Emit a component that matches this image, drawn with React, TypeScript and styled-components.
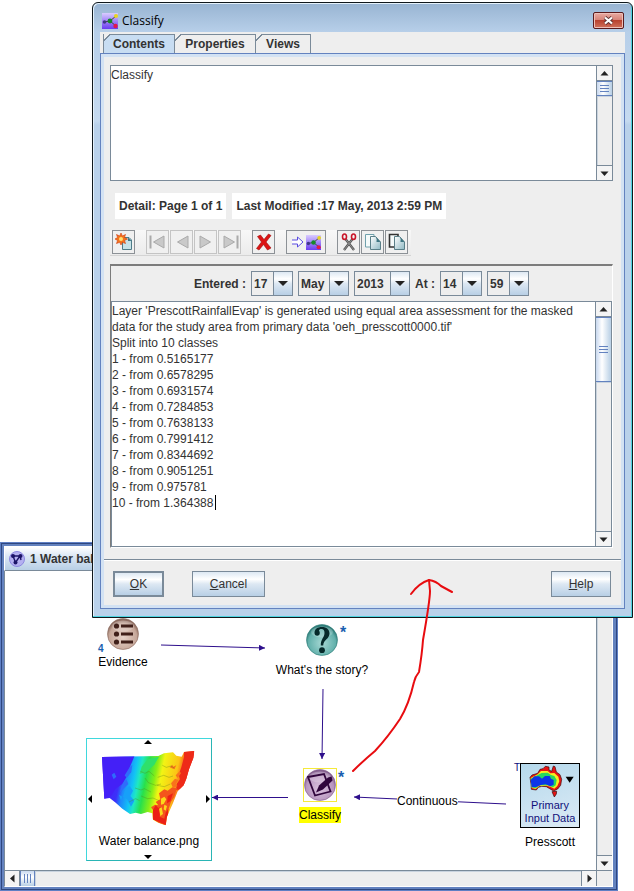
import React from 'react';
import styled, { createGlobalStyle, css } from 'styled-components';

const slate = '#7a8a99';
const steel = '#6382bf';
const face = '#eeeeee';
const ink = '#333333';
const edge = '#2e0f8c';
const steelGradient = 'linear-gradient(180deg, #dde8f3 0%, #ffffff 30%, #dde8f3 50%, #b8cfe5 100%)';

const GlobalStyle = createGlobalStyle`
  *, *::before, *::after { box-sizing: border-box; }
  html, body { margin: 0; background: #fff; }
  body, button, select, textarea { font-family: "Liberation Sans", Arial, sans-serif; font-size: 12px; color: ${ink}; }
`;

const Desktop = styled.main`
  position: relative;
  min-height: 891px;
  overflow: hidden;
`;

/* ---------- scroll bars ---------- */

const Bar = styled.div<{ $horizontal?: boolean }>`
  display: flex;
  flex: none;
  background: ${face};
  ${p => p.$horizontal
    ? css`height: 16px; border-top: 1px solid ${slate};`
    : css`width: 16px; flex-direction: column; border-left: 1px solid ${slate};`}
`;

const BarButton = styled.button<{ $horizontal?: boolean; $end?: boolean }>`
  display: flex;
  align-items: center;
  justify-content: center;
  flex: none;
  width: 15px;
  height: 15px;
  padding: 0;
  border: 0 solid ${slate};
  background: #f4f4f4;
  ${p => p.$horizontal
    ? (p.$end ? 'border-left-width: 1px;' : 'border-right-width: 1px;')
    : (p.$end ? 'border-top-width: 1px;' : 'border-bottom-width: 1px;')}
`;

const Thumb = styled.div<{ $horizontal?: boolean; $size: number }>`
  display: flex;
  align-items: center;
  justify-content: center;
  flex: none;
  border: 0 solid ${steel};
  ${p => p.$horizontal
    ? css`width: ${p.$size}px; border-width: 0 1px; background: linear-gradient(180deg, #c8d8ef, #fff 40%, #b8cfe5);`
    : css`height: ${p.$size}px; border-width: 1px 0; background: linear-gradient(90deg, #c8d8ef, #fff 40%, #b8cfe5);`}
`;

const Track = styled.div`
  flex: 1;
  box-shadow: inset 1px 1px 0 #c9d3de;
`;

const Triangle = ({ turn }: { turn: number }) => (
  <svg width="9" height="9" viewBox="0 0 9 9" aria-hidden="true">
    <path d="M4.500 2 L8.500 6.500 H.5Z" fill="#222" transform={`rotate(${turn} 4.500 4.500)`} />
  </svg>
);

function ScrollBar({ horizontal, thumb }: { horizontal?: boolean; thumb?: number }) {
  return (
    <Bar $horizontal={horizontal}>
      <BarButton $horizontal={horizontal} aria-label={horizontal ? 'Scroll left' : 'Scroll up'}>
        <Triangle turn={horizontal ? -90 : 0} />
      </BarButton>
      {thumb && (
        <Thumb $horizontal={horizontal} $size={thumb}>
          <svg width="9" height="9" viewBox="0 0 9 9" aria-hidden="true">
            <path
              d={horizontal ? 'M1.500 0V9M4.500 0V9M7.500 0V9' : 'M0 1.500H9M0 4.500H9M0 7.500H9'}
              stroke={steel}
              fill="none"
            />
          </svg>
        </Thumb>
      )}
      <Track />
      <BarButton $horizontal={horizontal} $end aria-label={horizontal ? 'Scroll right' : 'Scroll down'}>
        <Triangle turn={horizontal ? 90 : 180} />
      </BarButton>
    </Bar>
  );
}

/* ---------- map window ---------- */

const MapWindow = styled.section`
  position: absolute;
  left: 0;
  right: 16px;
  top: 542px;
  bottom: 0;
  display: flex;
  flex-direction: column;
  padding: 4px 5px 4px 4px;
  background: ${steel};
  box-shadow: inset 0 0 0 1px #5e7fc4, inset 0 0 0 2px #2f4780;
`;

const MapTitle = styled.header`
  display: flex;
  align-items: center;
  gap: 5px;
  flex: none;
  height: 25px;
  padding-left: 4px;
  border: 1px solid #fff;
  border-bottom-color: ${slate};
  background: linear-gradient(180deg, #fff, #dbe7f5 40%, #b8cfe5);
  font-weight: bold;
`;

const MapBody = styled.div`
  flex: 1;
  display: flex;
  min-height: 0;
  border-left: 1px solid ${slate};
  border-right: 1px solid #fff;
  background: #fff;
`;

const MapFooter = styled.div`
  display: flex;
  border: 1px solid #fff;
  border-top: 0;
  border-left-color: ${slate};
  & > :first-child { flex: 1; }
`;

const Corner = styled.div`
  width: 16px;
  border-left: 1px solid ${slate};
  border-top: 1px solid ${slate};
  background: ${face};
`;

const Canvas = styled.div`
  position: relative;
  flex: 1;
  overflow: hidden;
  color: #000;
`;

const Edges = styled.svg`
  position: absolute;
  left: 0;
  top: 0;
`;

const Node = styled.figure<{ $x: number; $y: number; $width: number }>`
  position: absolute;
  left: ${p => p.$x}px;
  top: ${p => p.$y}px;
  width: ${p => p.$width}px;
  margin: 0;
  display: flex;
  flex-direction: column;
  align-items: center;
`;

const Caption = styled.figcaption<{ $gap?: number; $marked?: boolean }>`
  margin-top: ${p => p.$gap ?? 5}px;
  line-height: 16px;
  white-space: nowrap;
  background: ${p => (p.$marked ? '#ffff00' : 'transparent')};
`;

const Badge = styled.span<{ $x: number; $y: number; $size: number; $light?: boolean }>`
  position: absolute;
  left: ${p => p.$x}px;
  top: ${p => p.$y}px;
  font-size: ${p => p.$size}px;
  line-height: ${p => p.$size}px;
  font-weight: ${p => (p.$light ? 'normal' : 'bold')};
  color: ${p => (p.$light ? '#10107a' : '#1a5fb0')};
`;

const EdgeLabel = styled.span`
  position: absolute;
  left: 392px;
  top: 222px;
  line-height: 16px;
  background: #fff;
`;

const Selection = styled.div`
  display: flex;
  border: 1px solid #f5ea3a;
`;

const PictureFrame = styled.div`
  position: relative;
  display: flex;
  flex-direction: column;
  align-items: center;
  width: 126px;
  height: 123px;
  padding-top: 9px;
  border: 1px solid #2ab5b5;
  border-top-color: #3fd8dd;
  border-left-color: #3fd8dd;
`;

const Handle = styled.span<{ $side: 'top' | 'right' | 'bottom' | 'left' }>`
  position: absolute;
  display: flex;
  ${p => ({
    top: 'top: -1px; left: 57px;',
    bottom: 'bottom: -1px; left: 57px;',
    left: 'left: -1px; top: 56px;',
    right: 'right: -1px; top: 56px;',
  }[p.$side])}
`;

const InputTile = styled.div`
  display: flex;
  flex-direction: column;
  align-items: center;
  width: 60px;
  height: 65px;
  padding-top: 1px;
  border: 1px solid #000;
  background: linear-gradient(160deg, #b5d9ec, #dceaf5);
  color: #10107a;
`;

const TileLine = styled.span`
  font-size: 11px;
  line-height: 13px;
  white-space: nowrap;
`;

const StateMap = () => (
  <svg width="100" height="80" viewBox="90 70 300 240" role="img" aria-label="Water balance map">
    <defs>
      <linearGradient id="rain" gradientUnits="userSpaceOnUse" x1="100" y1="165" x2="350" y2="215">
        <stop offset="0" stopColor="#4a1cf5" />
        <stop offset=".2" stopColor="#3c30fa" />
        <stop offset=".26" stopColor="#1e86fa" />
        <stop offset=".36" stopColor="#12c4f5" />
        <stop offset=".42" stopColor="#1fe8c0" />
        <stop offset=".5" stopColor="#28e04c" />
        <stop offset=".6" stopColor="#86ee18" />
        <stop offset=".67" stopColor="#f2f414" />
        <stop offset=".84" stopColor="#fbc416" />
        <stop offset=".92" stopColor="#f8501c" />
        <stop offset="1" stopColor="#ee1c1c" />
      </linearGradient>
      <clipPath id="state">
        <path d="M99 97 L268 94 285 86 312 83 322 93 338 96 345 82 376 79 373 100 366 118 360 134 352 162 344 182 326 200 312 235 300 262 294 276 290 302 268 294 252 285 250 266 236 262 216 268 200 264 183 268 160 252 140 234 122 220 106 222Z" />
      </clipPath>
    </defs>
    <g clipPath="url(#state)">
      <rect x="90" y="70" width="300" height="240" fill="url(#rain)" />
      <path d="M99 90 H198 L190 110 182 128 186 142 172 158 160 178 140 192 126 214 99 226Z" fill="#4420f7" />
      <path d="M182 128 l8 -8 -3 22 -14 18 -6 -8z M160 178 l12 -14 6 14 -18 18 -8 8z M128 150 l8 -6 6 12 -8 8z" fill="#2f6cfb" />
      <path d="M168 196 l14 -12 10 14 -8 16 12 14 -10 18 -12 -22 -12 -8z M150 210l10 6 -4 12z" fill="#17a0f8" />
      <path d="M236 104 l34 -8 -14 24 -22 20 -22 8 6 -22z" fill="#2fe06a" />
      <path d="M345 78 h34 l-4 30 -16 36 -10 36 -16 14 -12 2 2 -18 10 -14 -4 -14 8 -22 8 -30z" fill="#ee2a18" />
      <path d="M270 206 l16 -12 10 4 14 -10 14 2 -8 26 -10 16 -6 18 -8 24 0 30 -22 -8 -18 -12 0 -28 -6 -8 12 -8 10 2 -8 -10 14 -8 -2 -10z" fill="#f4551c" />
      <path d="M252 256 l8 -14 8 8 6 -2 -2 28 14 6 4 -18 8 -12 0 52 -48 -20z M296 214l16-8-8 24-10 6z" fill="#ec2015" />
      <path d="M276 222 l10 -6 6 8 -8 14 -8 2z M286 240l8 4-4 14-6-4z M270 252l8 -4 4 20 -8 6z" fill="#fbd81a" />
      <path d="M306 176 l12 -14 10 4 -8 14 6 4 -14 6z M302 128l8-8 2 6 10-4-6 12z M320 152l12-12 4 6-10 14z" fill="#f9721c" />
      <path d="M214 140 l14 6 12 -6 16 14 M198 190 l18 6 10 -4 20 10 M216 214 l20 8 16 -2 18 8 M228 160 l10 14 22 8 16 -4 M266 158 l18 -6 16 6 12 -4 M264 182 l22 4 18 -8 M180 232l20-10 12 6 M280 122l12 6 14-4 10 6" fill="none" stroke="#58801c" strokeOpacity=".5" strokeWidth="2" />
    </g>
  </svg>
);

const Australia = () => (
  <svg width="56" height="34" viewBox="103 73 168 102" aria-hidden="true">
    <path d="M127 110 L133 103 150 98 157 86 166 84 173 77 184 79 184 88 192 92 197 76 202 78 206 94 217 102 222 116 219 134 210 145 198 151 186 144 176 138 162 137 152 140 146 148 131 146 130 130Z" fill="#e81414" stroke="#3a0808" strokeWidth="2" />
    <path d="M129 112 L150 101 160 91 180 91 188 98 200 97 212 108 215 122 209 136 200 144 188 138 177 135 155 136 144 145 132 142Z" fill="#f8ee20" />
    <path d="M129 114 L150 103 162 97 180 96 190 103 200 106 207 118 204 134 196 140 180 134 156 134 144 143 132 140Z" fill="#28d860" />
    <path d="M129 118 L140 107 154 107 163 114 172 106 186 106 190 114 198 118 198 132 188 137 174 131 160 133 146 139 132 140Z" fill="#0c34e8" />
    <path d="M193 153 L207 152 206 160 200 169Z" fill="#e81414" stroke="#3a0808" strokeWidth="2" />
    <path d="M234 108 H258 L246 126Z" fill="#000" />
  </svg>
);

const Disc = ({ kind }: { kind: 'list' | 'question' | 'note' }) => {
  const tone = {
    list: ['#e6d3ca', '#c6a799', '#8d6c60'],
    question: ['#a6d8d4', '#62b0ab', '#2f7d79'],
    note: ['#dcc4e0', '#b795bf', '#84608f'],
  }[kind];
  return (
    <svg width="32" height="32" viewBox="0 0 32 32" aria-hidden="true">
      <defs>
        <radialGradient id={`disc-${kind}`} cx=".5" cy=".6" r=".55">
          <stop offset="0" stopColor={tone[0]} />
          <stop offset=".8" stopColor={tone[1]} />
          <stop offset="1" stopColor={tone[2]} />
        </radialGradient>
      </defs>
      <circle cx="16" cy="16" r="15.500" fill={`url(#disc-${kind})`} stroke={tone[2]} strokeWidth=".6" />
      <ellipse cx="16" cy="8" rx="11" ry="5.500" fill="#fff" opacity=".22" />
      {kind === 'list' && (
        <g fill="#40201a">
          <circle cx="9.500" cy="8" r="2.600" /><circle cx="9.500" cy="16" r="2.600" /><circle cx="9.500" cy="24" r="2.600" />
          <path d="M14 6.500h12v3H14z M14 14.500h12v3H14z M14 22.500h12v3H14z" />
        </g>
      )}
      {kind === 'question' && (
        <g fill="#06292a">
          <path d="M8.500 9 C8.500 5 11.500 3 16 3 C20.500 3 23.500 5.500 23.500 9.500 C23.500 15 17.500 15.500 17.200 21.500 H14.800 C14.500 15 18.500 13.500 18.500 9 C18.500 6.500 17.500 5 15.500 5 C14 5 13 5.700 13 6.500 C13.500 7.200 13.800 8 13.800 9 C13.800 10.800 12.700 11.800 11.200 11.800 C9.500 11.800 8.500 10.600 8.500 9Z" />
          <circle cx="16" cy="26.200" r="2.900" />
        </g>
      )}
      {kind === 'note' && (
        <g>
          <path d="M4 8 L20 5 26.500 22.500 11 26.500Z" fill="none" stroke="#30063c" strokeWidth="1.800" />
          <path d="M27.500 7.500 L24 8.500 15 16.500 12 23.500 19 20.500 28.500 11.500Z" fill="#30063c" />
        </g>
      )}
    </svg>
  );
};

const Arrow = ({ side }: { side: 'top' | 'right' | 'bottom' | 'left' }) => (
  <Handle $side={side}>
    <svg width="8" height="8" viewBox="0 0 8 8" aria-hidden="true">
      <path
        d="M4 2 L8 6 H0Z"
        fill="#000"
        transform={`rotate(${{ top: 0, right: 90, bottom: 180, left: 270 }[side]} 4 4)`}
      />
    </svg>
  </Handle>
);

function MapView() {
  return (
    <MapWindow aria-label="Water balance map window">
      <MapTitle>
        <svg width="16" height="16" viewBox="0 0 16 16" aria-hidden="true">
          <circle cx="8" cy="8" r="7.500" fill="#b4b0f0" stroke="#8c88e0" />
          <path d="M4 5 L11 5 6.500 11.500Z M11 5 L12 9" stroke="#1c1468" strokeWidth="1.400" fill="none" />
          <circle cx="4" cy="5" r="2" fill="#1c1468" /><circle cx="11.500" cy="5" r="2" fill="#1c1468" />
          <circle cx="6.500" cy="11.500" r="2" fill="#1c1468" />
        </svg>
        1 Water balance
      </MapTitle>
      <MapBody>
        <Canvas>
          <Edges width="590" height="299" viewBox="0 0 590 299" aria-hidden="true">
            <defs>
              <marker id="tip" markerWidth="7" markerHeight="6" refX="6" refY="3" orient="auto" markerUnits="userSpaceOnUse">
                <path d="M0 0 L6 3 0 6Z" fill={edge} />
              </marker>
            </defs>
            <g stroke={edge}>
              <path d="M156 74 L260 77" markerEnd="url(#tip)" />
              <path d="M318 118 L317 188" markerEnd="url(#tip)" />
              <path d="M283 226.500 L207 226.500" markerEnd="url(#tip)" />
              <path d="M501 233 L349 226" markerEnd="url(#tip)" />
            </g>
          </Edges>
          <EdgeLabel>Continuous</EdgeLabel>

          <Node $x={88} $y={47} $width={60}>
            <Disc kind="list" />
            <Caption $gap={4}>Evidence</Caption>
            <Badge $x={5} $y={26} $size={10}>4</Badge>
          </Node>

          <Node $x={267} $y={53} $width={100}>
            <Disc kind="question" />
            <Caption $gap={6}>What's the story?</Caption>
            <Badge $x={68} $y={1} $size={16}>*</Badge>
          </Node>

          <Node $x={275} $y={197} $width={80}>
            <Selection><Disc kind="note" /></Selection>
            <Caption $marked>Classify</Caption>
            <Badge $x={58} $y={2} $size={16}>*</Badge>
          </Node>

          <Node $x={81} $y={167} $width={126}>
            <PictureFrame>
              <Arrow side="top" />
              <Arrow side="right" />
              <Arrow side="bottom" />
              <Arrow side="left" />
              <StateMap />
              <Caption $gap={5}>Water balance.png</Caption>
            </PictureFrame>
          </Node>

          <Node $x={515} $y={192} $width={60}>
            <InputTile>
              <Australia />
              <TileLine>Primary</TileLine>
              <TileLine>Input Data</TileLine>
            </InputTile>
            <Caption $gap={6}>Presscott</Caption>
            <Badge $x={-6} $y={0} $size={10} $light>T</Badge>
          </Node>
        </Canvas>
        <ScrollBar />
      </MapBody>
      <MapFooter>
        <ScrollBar horizontal thumb={15} />
        <Corner />
      </MapFooter>
    </MapWindow>
  );
}

/* ---------- dialog ---------- */

const DialogFrame = styled.section`
  position: absolute;
  left: 92px;
  right: 1px;
  top: 2px;
  padding: 0 7px 8px;
  border: 1px solid #10181c;
  border-radius: 6px 6px 0 0;
  background: linear-gradient(180deg, #98b4d2 0, #b7cfe9 29px, #c5daf0 118px, #b9d1ea 122px);
  box-shadow: inset -1px -1px 0 #4cd3e0, inset 1px 1px 0 #e4f1fb;
`;

const TitleBar = styled.header`
  display: flex;
  align-items: center;
  height: 29px;
  padding: 6px 1px 0 2px;
  gap: 4px;
`;

const Title = styled.h1`
  flex: 1;
  margin: 0;
  font: 12px/16px "Open Sans", "Noto Sans", sans-serif;
  color: #000;
`;

const CloseButton = styled.button`
  display: flex;
  align-items: center;
  justify-content: center;
  width: 31px;
  height: 17px;
  padding: 0;
  border: 1px solid #5a1a1c;
  border-radius: 2px;
  background: linear-gradient(180deg, #e8aaa2 0%, #d78479 45%, #b9422f 50%, #d0725c 100%);
  box-shadow: inset 0 0 0 1px #eebfb8;
`;

const Content = styled.div`
  background: ${face};
`;

const Tabs = styled.div`
  display: flex;
  height: 21px;
  padding: 2px 0 0 3px;
`;

const Tab = styled.button<{ $active?: boolean; $width: number }>`
  width: ${p => p.$width}px;
  padding: 0;
  border: 0;
  border-right: 1px solid ${slate};
  background:
    linear-gradient(135deg, ${face} 4px, ${slate} 4px, ${slate} 5px, transparent 5px) no-repeat 0 0 / 8px 8px,
    linear-gradient(${slate}, ${slate}) no-repeat 7px 0 / 100% 1px,
    ${p => (p.$active ? '#c8ddf2' : face)};
  font-weight: bold;
  border-left: ${p => (p.$active ? `1px solid ${slate}` : '0')};
  text-align: center;
`;

const TabPanel = styled.div`
  padding: 3px;
  border: 1px solid ${steel};
  box-shadow: inset 0 0 0 3px #d3e2f3;
`;

const Body = styled.div`
  padding: 8px 8px 11px 6px;
`;

const TextFrame = styled.div<{ $height: number }>`
  position: relative;
  display: flex;
  height: ${p => p.$height}px;
  border: 1px solid ${slate};
  background: #fff;
`;

const TextBox = styled.textarea`
  flex: 1;
  min-width: 0;
  padding: 1px 0;
  border: 0;
  outline: 0;
  resize: none;
  overflow: hidden;
  background: transparent;
  line-height: 16px;
`;

const Caret = styled.span`
  position: absolute;
  left: 103px;
  top: 193px;
  width: 1px;
  height: 15px;
  background: #000;
`;

const InfoRow = styled.div`
  display: flex;
  gap: 6px;
  padding: 12px 5px 11px;
`;

const Info = styled.span`
  padding: 0 4px;
  background: #fff;
  font-weight: bold;
  line-height: 26px;
  white-space: nowrap;
`;

const ToolBar = styled.div`
  display: flex;
  gap: 11px;
  width: fit-content;
  height: 26px;
  padding: 0 3px 0 2px;
  border-bottom: 1px solid #d4d4d4;
  background: linear-gradient(180deg, #f8f8f8, #ebebeb);
`;

const ToolGroup = styled.div`
  display: flex;
  gap: 1px;
`;

const ToolButton = styled.button<{ $width?: number }>`
  display: flex;
  align-items: center;
  justify-content: center;
  gap: 2px;
  width: ${p => p.$width ?? 23}px;
  height: 24px;
  padding: 0;
  border: 1px solid #8c9196;
  background: #f0f0f0;
  &:disabled { border-color: #c4c4c4; }
`;

const DetailPanel = styled.div`
  margin-top: 8px;
  border: 1px solid #fff;
  border-top: 2px solid #7c7c7c;
  border-left: 1px solid #7c7c7c;
`;

const DateRow = styled.div`
  display: flex;
  align-items: center;
  justify-content: center;
  gap: 5px;
  height: 35px;
  font-weight: bold;
`;

const DateLabel = styled.span`
  white-space: nowrap;
`;

const Combo = styled.span<{ $width: number }>`
  position: relative;
  width: ${p => p.$width}px;
  height: 25px;
  display: flex;
`;

const ComboSelect = styled.select`
  appearance: none;
  width: 100%;
  padding: 0 18px 0 2px;
  border: 1px solid ${slate};
  border-radius: 0;
  background: ${face};
  font-weight: bold;
`;

const ComboArrow = styled.span`
  position: absolute;
  top: 1px;
  right: 1px;
  bottom: 1px;
  width: 19px;
  display: flex;
  align-items: center;
  justify-content: center;
  border-left: 1px solid ${slate};
  background: ${steelGradient};
  pointer-events: none;
`;

const Footer = styled.footer`
  display: flex;
  gap: 28px;
  padding: 11px 10px 8px 9px;
  border-top: 1px solid ${slate};
  box-shadow: inset 0 1px 0 #fff;
`;

const PushButton = styled.button<{ $width: number; $last?: boolean; $default?: boolean }>`
  width: ${p => p.$width}px;
  height: 26px;
  margin-left: ${p => (p.$last ? 'auto' : '0')};
  padding: 0;
  border: ${p => (p.$default ? 2 : 1)}px solid ${slate};
  background: ${steelGradient};
`;

const Mark = styled.svg`
  position: absolute;
  left: 0;
  top: 0;
  pointer-events: none;
`;

const AppIcon = ({ size }: { size: number }) => (
  <svg width={size} height={size} viewBox="0 0 16 16" aria-hidden="true">
    <defs>
      <linearGradient id="app" x1="0" y1="0" x2="0" y2="1">
        <stop offset="0" stopColor="#d9ccff" />
        <stop offset="1" stopColor="#6a3cf0" />
      </linearGradient>
    </defs>
    <rect width="16" height="16" fill="url(#app)" />
    <path d="M2 9 L8 8 14 3 M8 8 L14 13" stroke="#444" strokeWidth="1" fill="none" />
    <circle cx="2.500" cy="9" r="1.800" fill="#413888" />
    <circle cx="8" cy="8" r="2.400" fill="#168a28" />
    <circle cx="14" cy="3" r="2" fill="#e6d61e" />
    <circle cx="13.500" cy="13" r="2.200" fill="#e0184c" />
  </svg>
);

const NavIcon = ({ kind }: { kind: 'first' | 'prev' | 'next' | 'last' }) => (
  <svg width="18" height="16" viewBox="0 0 18 16" aria-hidden="true" fill="#c9c9c9" stroke="#aaa">
    {(kind === 'first' || kind === 'prev') && <path d="M15 2 V14 L4.500 8Z" />}
    {(kind === 'next' || kind === 'last') && <path d="M3 2 V14 L13.500 8Z" />}
    {kind === 'first' && <path d="M1.500 1.500 V14.500" strokeWidth="2" />}
    {kind === 'last' && <path d="M16.500 1.500 V14.500" strokeWidth="2" />}
  </svg>
);

const Icon = ({ children }: { children: React.ReactNode }) => (
  <svg width="18" height="18" viewBox="0 0 18 18" aria-hidden="true">{children}</svg>
);

const Pages = ({ dark }: { dark?: boolean }) => (
  <Icon>
    <defs>
      <linearGradient id={dark ? 'page-dark' : 'page-light'} x1="0" y1="0" x2="1" y2="1">
        <stop offset="0" stopColor="#fff" />
        <stop offset="1" stopColor="#8fb9c4" />
      </linearGradient>
    </defs>
    <path d="M1.500 1.500 H10 V14 H1.500Z" fill="#f4fafa" stroke={dark ? '#333' : '#6fa0ac'} strokeWidth={dark ? 1.6 : 1} />
    <path d="M6.500 3.500 H11.500 L16.500 9 V16.500 H6.500Z" fill={`url(#${dark ? 'page-dark' : 'page-light'})`} stroke="#5a7f88" />
    <path d="M11.500 3.500 Q13.500 6 12.500 9 L16.500 9Z" fill="#3e7582" />
  </Icon>
);

const details = `Layer 'PrescottRainfallEvap' is generated using equal area assessment for the masked
data for the study area from primary data 'oeh_presscott0000.tif'
Split into 10 classes
1 - from 0.5165177
2 - from 0.6578295
3 - from 0.6931574
4 - from 0.7284853
5 - from 0.7638133
6 - from 0.7991412
7 - from 0.8344692
8 - from 0.9051251
9 - from 0.975781
10 - from 1.364388`;

function ComboBox({ label, value, width }: { label: string; value: string; width: number }) {
  return (
    <Combo $width={width}>
      <ComboSelect aria-label={label} defaultValue={value}>
        <option>{value}</option>
      </ComboSelect>
      <ComboArrow>
        <svg width="10" height="5" viewBox="0 0 10 5" aria-hidden="true"><path d="M0 0H10L5 5Z" fill="#222" /></svg>
      </ComboArrow>
    </Combo>
  );
}

function ClassifyDialog() {
  return (
    <DialogFrame role="dialog" aria-label="Classify">
      <TitleBar>
        <AppIcon size={16} />
        <Title>Classify</Title>
        <CloseButton aria-label="Close">
          <svg width="11" height="9" viewBox="0 0 11 9" aria-hidden="true">
            <path d="M2 1.500 L9 7.500 M9 1.500 L2 7.500" stroke="#5b3030" strokeWidth="3.800" />
            <path d="M2 1.500 L9 7.500 M9 1.500 L2 7.500" stroke="#fff" strokeWidth="2.200" />
          </svg>
        </CloseButton>
      </TitleBar>
      <Content>
        <Tabs role="tablist">
          <Tab role="tab" aria-selected $active $width={72}>Contents</Tab>
          <Tab role="tab" $width={81}>Properties</Tab>
          <Tab role="tab" $width={55}>Views</Tab>
        </Tabs>
        <TabPanel role="tabpanel">
          <Body>
            <TextFrame $height={116}>
              <TextBox aria-label="Label" defaultValue="Classify" />
              <ScrollBar thumb={15} />
            </TextFrame>
            <InfoRow>
              <Info>Detail: Page 1 of 1</Info>
              <Info>Last Modified :17 May, 2013 2:59 PM</Info>
            </InfoRow>
            <ToolBar role="toolbar">
              <ToolGroup>
                <ToolButton aria-label="New page">
                  <Icon>
                    <path d="M7.500 4.500 H14 L16.500 7 V16.500 H7.500Z" fill="#c6e2e8" stroke="#4e7c88" />
                    <path d="M13 4.500 V8 H16.500Z" fill="#3e7582" />
                    <path d="M6 0 L7.400 3 10.500 1.500 9.500 4.500 12.500 6 9.500 7.500 10.500 10.500 7.400 9.300 6 12 4.700 9.300 1.500 10.500 2.600 7.500 0 6 2.600 4.500 1.500 1.500 4.700 3Z" fill="#f4731c" stroke="#d03c10" strokeWidth=".6" />
                    <circle cx="6" cy="6" r="2" fill="#ffe070" />
                  </Icon>
                </ToolButton>
              </ToolGroup>
              <ToolGroup>
                <ToolButton disabled aria-label="First page"><NavIcon kind="first" /></ToolButton>
                <ToolButton disabled aria-label="Previous page"><NavIcon kind="prev" /></ToolButton>
                <ToolButton disabled aria-label="Next page"><NavIcon kind="next" /></ToolButton>
                <ToolButton disabled aria-label="Last page"><NavIcon kind="last" /></ToolButton>
              </ToolGroup>
              <ToolGroup>
                <ToolButton aria-label="Delete page">
                  <Icon><path d="M2.500 3.500 L5.500 2 9 6.500 13.500 1 16 2.500 11 9 16 15 12.500 17 8.500 11.500 4 17 1.500 15.500 6.500 9Z" fill="#dc1414" stroke="#9c0c0c" strokeWidth=".6" /></Icon>
                </ToolButton>
              </ToolGroup>
              <ToolGroup>
                <ToolButton $width={40} aria-label="Send to map">
                  <svg width="13" height="12" viewBox="0 0 13 12" aria-hidden="true">
                    <path d="M1 4 H6.500 V1 L12 6 6.500 11 V8 H1" fill="#fff" stroke="#5a4ce0" />
                  </svg>
                  <AppIcon size={15} />
                </ToolButton>
              </ToolGroup>
              <ToolGroup>
                <ToolButton aria-label="Cut">
                  <Icon>
                    <path d="M5.500 6 L14 17 M12.500 6 L4 17" stroke="#555" strokeWidth="2.400" />
                    <path d="M5.500 6 L14 17 M12.500 6 L4 17" stroke="#aaa" strokeWidth=".7" />
                    <ellipse cx="4.500" cy="3.700" rx="2" ry="2.700" fill="none" stroke="#c81428" strokeWidth="1.600" />
                    <ellipse cx="13.500" cy="3.700" rx="2" ry="2.700" fill="none" stroke="#c81428" strokeWidth="1.600" />
                  </Icon>
                </ToolButton>
                <ToolButton aria-label="Copy"><Pages /></ToolButton>
                <ToolButton aria-label="Paste"><Pages dark /></ToolButton>
              </ToolGroup>
            </ToolBar>
            <DetailPanel>
              <DateRow>
                <DateLabel>Entered :</DateLabel>
                <ComboBox label="Day" value="17" width={42} />
                <ComboBox label="Month" value="May" width={51} />
                <ComboBox label="Year" value="2013" width={56} />
                <DateLabel>At :</DateLabel>
                <ComboBox label="Hour" value="14" width={42} />
                <ComboBox label="Minute" value="59" width={42} />
              </DateRow>
              <TextFrame $height={246}>
                <TextBox aria-label="Detail" wrap="off" defaultValue={details} />
                <Caret />
                <ScrollBar thumb={65} />
              </TextFrame>
            </DetailPanel>
          </Body>
          <Footer>
            <PushButton $width={51} $default><u>O</u>K</PushButton>
            <PushButton $width={73}><u>C</u>ancel</PushButton>
            <PushButton $width={60} $last><u>H</u>elp</PushButton>
          </Footer>
        </TabPanel>
      </Content>
    </DialogFrame>
  );
}

export default function App() {
  return (
    <Desktop>
      <GlobalStyle />
      <MapView />
      <ClassifyDialog />
      <Mark width="634" height="891" viewBox="0 0 634 891" aria-hidden="true">
        <g fill="none" stroke="#e80c10" strokeWidth="2" strokeLinecap="round" strokeLinejoin="round">
          <path d="M353 771 Q363 761 375 751 Q388 737 400 719 Q409 704 414 682 Q415 677 419 672 Q422 654 423 640 Q430 600 430 591 L429 580" />
          <path d="M411 594 Q419 583 429 580 Q436 581 441 586 L452 592" />
        </g>
      </Mark>
    </Desktop>
  );
}
